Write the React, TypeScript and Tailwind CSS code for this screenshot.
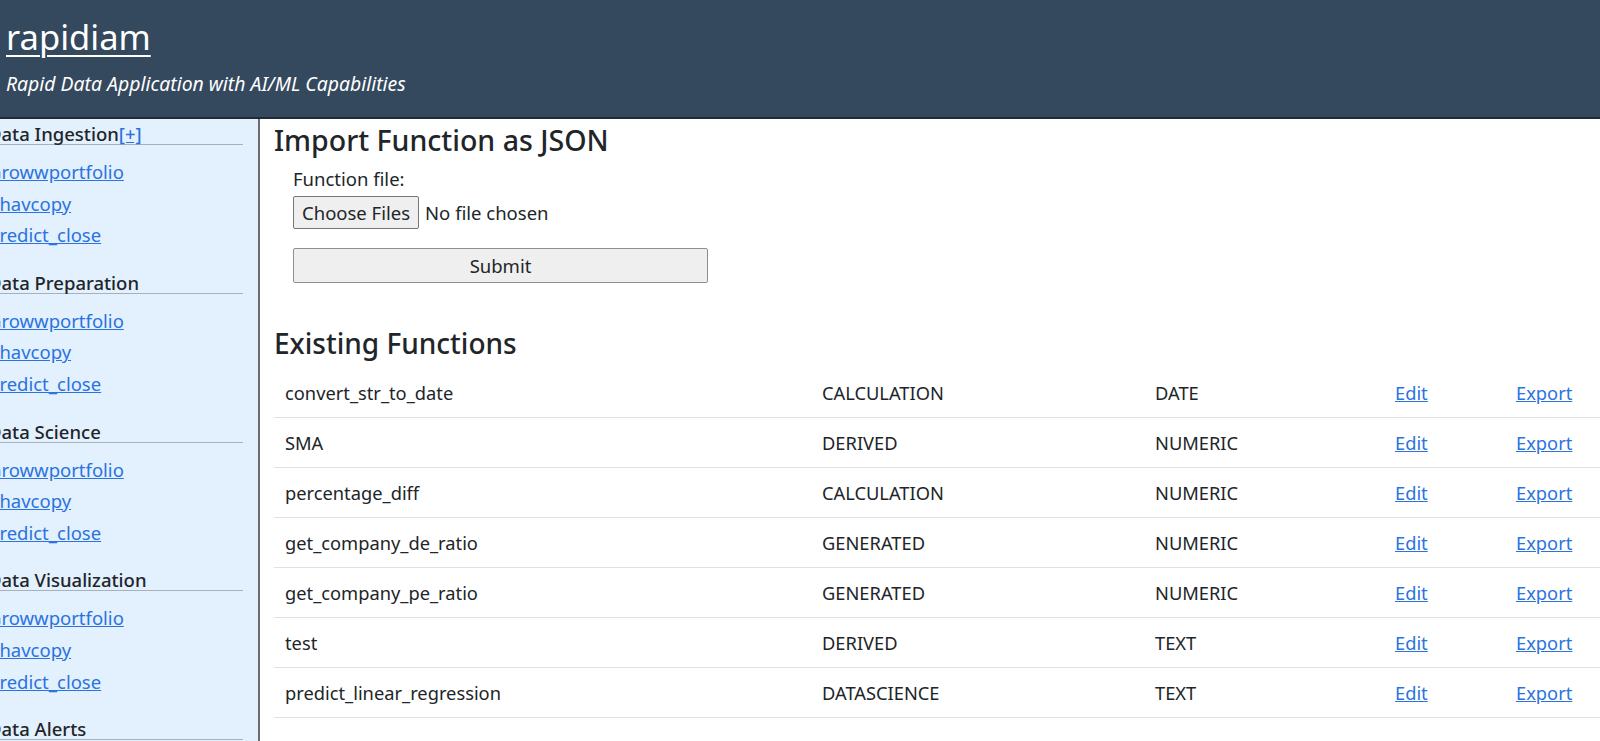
import React from "react";

const sections = ["Data Ingestion", "Data Preparation", "Data Science", "Data Visualization", "Data Alerts"];
const links = ["Growwportfolio", "bhavcopy", "predict_close"];
const rows = [
  ["convert_str_to_date", "CALCULATION", "DATE"],
  ["SMA", "DERIVED", "NUMERIC"],
  ["percentage_diff", "CALCULATION", "NUMERIC"],
  ["get_company_de_ratio", "GENERATED", "NUMERIC"],
  ["get_company_pe_ratio", "GENERATED", "NUMERIC"],
  ["test", "DERIVED", "TEXT"],
  ["predict_linear_regression", "DATASCIENCE", "TEXT"],
];

export default function App() {
  return (
    <div className="h-[741px] w-[1600px] overflow-hidden bg-white font-['Noto_Sans',sans-serif] text-[#212529]">
      <header className="h-[119px] bg-[#34495e] border-b-2 border-[#1f2a36] pl-[6px] pt-[14px]">
        <a href="#" className="text-white text-[34.5px] leading-[46px] underline decoration-[2px] underline-offset-[5px]">rapidiam</a>
        <p className="mt-[11px] text-white italic text-[19.4px] leading-[26px]">Rapid Data Application with AI/ML Capabilities</p>
      </header>
      <div className="flex h-[622px]">
        <aside className="w-[260px] shrink-0 bg-[#e3f0fd] border-r-2 border-[#6b6b6b] overflow-hidden">
          <div className="ml-[-12px] w-[255px] pt-[4px]">
            {sections.map((s, i) => (
              <div key={s} className="mb-[21px]">
                <div className="border-b border-[#a8b0b8] text-[18.5px] leading-[21px] font-medium text-[#212529]">
                  {s}
                  {i === 0 && <a href="#" className="text-[#2a73e0] underline">[+]</a>}
                </div>
                {i < 4 && (
                  <div className="pt-[11px] flex flex-col">
                    {links.map((l) => (
                      <a key={l} href="#" className="text-[#2a73e0] underline text-[18.5px] leading-[31.6px]">{l}</a>
                    ))}
                  </div>
                )}
              </div>
            ))}
          </div>
        </aside>
        <main className="flex-1 pl-[14px] pt-[2px]">
          <h2 className="text-[28.5px] leading-[38px] font-medium text-[#212529]">Import Function as JSON</h2>
          <div className="pl-[19px] pt-[7px]">
            <div className="text-[18.5px] leading-[25px]">Function file:</div>
            <div className="flex items-center mt-[5px]">
              <button className="h-[33px] px-[8px] bg-[#efefef] border border-[#767676] rounded-[2px] text-[18.5px] text-[#212529]">Choose Files</button>
              <span className="ml-[6px] text-[18.5px]">No file chosen</span>
            </div>
            <button className="mt-[19px] h-[35px] w-[415px] bg-[#efefef] border border-[#8f8f8f] rounded-[2px] text-[18.5px] text-[#212529]">Submit</button>
          </div>
          <h2 className="mt-[41px] text-[28px] leading-[38px] font-medium text-[#212529]">Existing Functions</h2>
          <div className="mt-[6px] w-[1340px]">
            {rows.map((r) => (
              <div key={r[0]} className="grid grid-cols-[538px_333px_240px_121px_108px] h-[50px] items-center border-b border-[#dee2e6] text-[18.3px] text-[#212529]">
                <div className="pl-[11px]">{r[0]}</div>
                <div className="pl-[10px]">{r[1]}</div>
                <div className="pl-[10px]">{r[2]}</div>
                <div className="pl-[10px]"><a href="#" className="text-[#2a73e0] underline">Edit</a></div>
                <div className="pl-[10px]"><a href="#" className="text-[#2a73e0] underline">Export</a></div>
              </div>
            ))}
          </div>
        </main>
      </div>
    </div>
  );
}
